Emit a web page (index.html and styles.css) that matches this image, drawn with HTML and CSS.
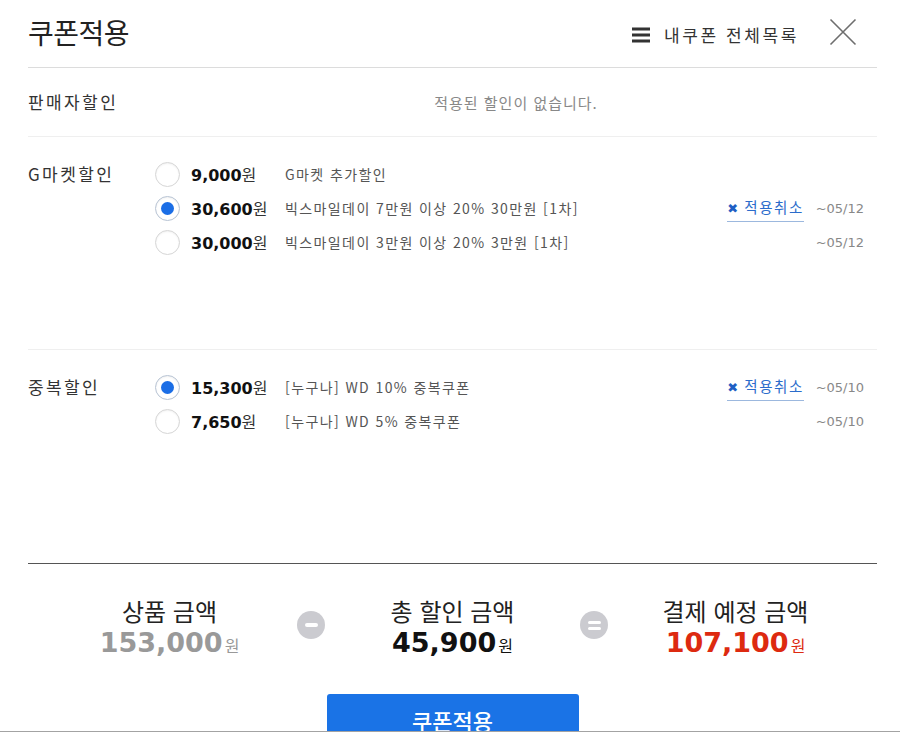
FILE: index.html
```html
<!DOCTYPE html>
<html lang="ko">
<head>
<meta charset="utf-8">
<title>쿠폰적용</title>
<link rel="stylesheet" href="styles.css">
</head>
<body>
<div class="page">
  <div class="inner">
    <header class="head">
      <h1 class="title">쿠폰적용</h1>
      <div class="head-right">
        <a class="mylist" href="#">
          <svg class="burger" width="18" height="16" viewBox="0 0 18 16"><rect x="0" y="0.5" width="18" height="3" fill="#333"/><rect x="0" y="6.5" width="18" height="3" fill="#333"/><rect x="0" y="12.5" width="18" height="3" fill="#333"/></svg>
          <span>내쿠폰 전체목록</span>
        </a>
        <button class="close" aria-label="닫기">
          <svg width="28" height="28" viewBox="0 0 28 28"><path d="M1.5 1.5 L26.5 26.5 M26.5 1.5 L1.5 26.5" stroke="#6e6e6e" stroke-width="1.6" fill="none"/></svg>
        </button>
      </div>
    </header>

    <section class="seller">
      <div class="label">판매자할인</div>
      <div class="empty">적용된 할인이 없습니다.</div>
    </section>

    <section class="group first">
      <div class="label">G마켓할인</div>
      <ul class="opts">
        <li class="opt"><span class="radio"></span><span class="amt"><b>9,000</b>원</span><span class="desc">G마켓 추가할인</span></li>
        <li class="opt"><span class="radio on"></span><span class="amt"><b>30,600</b>원</span><span class="desc">빅스마일데이 7만원 이상 20% 30만원 [1차]</span><a class="cancel" href="#"><span class="x">✖</span>적용취소</a><span class="date">~05/12</span></li>
        <li class="opt"><span class="radio"></span><span class="amt"><b>30,000</b>원</span><span class="desc">빅스마일데이 3만원 이상 20% 3만원 [1차]</span><span class="date">~05/12</span></li>
      </ul>
    </section>

    <section class="group">
      <div class="label">중복할인</div>
      <ul class="opts">
        <li class="opt"><span class="radio on"></span><span class="amt"><b>15,300</b>원</span><span class="desc">[누구나] WD 10% 중복쿠폰</span><a class="cancel" href="#"><span class="x">✖</span>적용취소</a><span class="date">~05/10</span></li>
        <li class="opt"><span class="radio"></span><span class="amt"><b>7,650</b>원</span><span class="desc">[누구나] WD 5% 중복쿠폰</span><span class="date">~05/10</span></li>
      </ul>
    </section>

    <section class="summary">
      <div class="col">
        <div class="sum-title">상품 금액</div>
        <div class="sum-amt gray">153,000<small>원</small></div>
      </div>
      <div class="op"><span class="ic"><span class="bar"></span></span></div>
      <div class="col">
        <div class="sum-title">총 할인 금액</div>
        <div class="sum-amt dark">45,900<small>원</small></div>
      </div>
      <div class="op"><span class="ic eq"><span class="bar"></span><span class="bar"></span></span></div>
      <div class="col">
        <div class="sum-title">결제 예정 금액</div>
        <div class="sum-amt red">107,100<small>원</small></div>
      </div>
    </section>

    <div class="apply-wrap">
      <button class="apply">쿠폰적용</button>
    </div>
  </div>
</div>
</body>
</html>
```

FILE: styles.css
```css
* { box-sizing: border-box; }
html, body { margin: 0; padding: 0; background: #fff; }
body {
  font-family: "Noto Sans CJK KR", "Noto Sans", sans-serif;
  color: #333;
}
.page {
  width: 900px;
  height: 732px;
  overflow: hidden;
  border-bottom: 1px solid #a3a3a3;
}
.inner {
  margin-left: 28px;
  width: 849px;
}

/* header */
.head {
  height: 68px;
  border-bottom: 1px solid #dcdcdc;
  display: flex;
  align-items: center;
  justify-content: space-between;
  padding-right: 20px;
}
.title {
  margin: -3px 0 0 0;
  font-size: 28px;
  line-height: 34px;
  font-weight: 400;
  color: #222;
  letter-spacing: -0.5px;
}
.head-right {
  display: flex;
  align-items: center;
}
.mylist {
  display: flex;
  align-items: center;
  gap: 14px;
  text-decoration: none;
  color: #333;
  font-size: 17px;
  line-height: 20px;
  letter-spacing: 2.6px;
  margin-top: 3px;
}
.burger { display: block; }
.close {
  margin-left: 30px;
  padding: 0;
  border: 0;
  background: none;
  width: 28px;
  height: 28px;
  margin-top: -3px;
}
.close svg { display: block; }

/* seller row */
.seller {
  height: 69px;
  border-bottom: 1px solid #efefef;
  display: flex;
  align-items: center;
}
.label {
  width: 127px;
  flex: none;
  font-size: 17px;
  line-height: 34px;
  color: #333;
  letter-spacing: 2.4px;
}
.empty {
  flex: 1;
  text-align: center;
  font-size: 15px;
  letter-spacing: 1px;
  color: #888;
}

/* coupon groups */
.group {
  height: 213px;
  padding-top: 20px;
  display: flex;
  align-items: flex-start;
}
.group.first { border-bottom: 1px solid #efefef; }
.opts {
  flex: 1;
  list-style: none;
  margin: 0;
  padding: 0 13px 0 0;
}
.opt {
  height: 34px;
  display: flex;
  align-items: center;
}
.radio {
  flex: none;
  width: 25px;
  height: 25px;
  border-radius: 50%;
  border: 1px solid #d6d6d6;
  background: #fff;
  margin-right: 11px;
  box-shadow: inset 0 1px 2px rgba(0,0,0,0.06);
  display: flex;
  align-items: center;
  justify-content: center;
}
.radio.on { border-color: #b7c3d3; }
.radio.on::after {
  content: "";
  width: 13px;
  height: 13px;
  border-radius: 50%;
  background: #1b6ee6;
}
.amt {
  flex: none;
  width: 94px;
  font-size: 16px;
  color: #333;
  white-space: nowrap;
}
.amt b {
  font-family: "DejaVu Sans", sans-serif;
  font-weight: bold;
  font-size: 16px;
  color: #111;
}
.desc {
  flex: 1;
  font-size: 14px;
  letter-spacing: 1.4px;
  color: #555;
  white-space: nowrap;
}
.cancel {
  flex: none;
  margin-top: 4px;
  margin-right: 10px;
  font-size: 14.5px;
  line-height: 18px;
  padding-bottom: 3px;
  color: #2b6ccb;
  text-decoration: none;
  border-bottom: 1px solid #9cb8de;
  letter-spacing: 1.6px;
}
.cancel .x {
  font-size: 13px;
  color: #1f5fc4;
  margin-right: 6px;
  letter-spacing: 0;
  font-family: "DejaVu Sans", sans-serif;
}
.date {
  flex: none;
  width: 50px;
  margin-left: auto;
  text-align: right;
  font-family: "DejaVu Sans", sans-serif;
  font-size: 13px;
  color: #888;
}
.cancel + .date { margin-left: 0; }

/* summary */
.summary {
  border-top: 1px solid #555;
  display: flex;
  padding-top: 32px;
}
.col {
  flex: 1;
  text-align: center;
}
.sum-title {
  font-size: 24px;
  line-height: 30px;
  color: #222;
}
.sum-amt {
  font-family: "DejaVu Sans", sans-serif;
  font-weight: bold;
  font-size: 27px;
  line-height: 34px;
}
.sum-amt small {
  font-family: "Noto Sans CJK KR", sans-serif;
  font-weight: normal;
  font-size: 16px;
  margin-left: 2px;
}
.gray { color: #999; }
.dark { color: #111; }
.red { color: #dd2a10; }
.op {
  width: 0;
  display: flex;
  justify-content: center;
}
.ic {
  flex: none;
  margin-top: 15px;
  width: 28px;
  height: 28px;
  border-radius: 50%;
  background: #cbcbd0;
  display: flex;
  flex-direction: column;
  align-items: center;
  justify-content: center;
  gap: 3px;
}
.ic .bar {
  width: 13px;
  height: 4px;
  border-radius: 2px;
  background: #fff;
}
.ic.eq .bar { height: 3px; }

/* apply button */
.apply-wrap {
  display: flex;
  justify-content: center;
  margin-top: 32px;
}
.apply {
  width: 252px;
  height: 52px;
  border: 0;
  border-radius: 3px 3px 0 0;
  background: #1a73e6;
  color: #fff;
  font-family: "Noto Sans CJK KR", sans-serif;
  font-size: 22px;
  font-weight: 500;
  line-height: 46px;
  padding: 0;
}
```
